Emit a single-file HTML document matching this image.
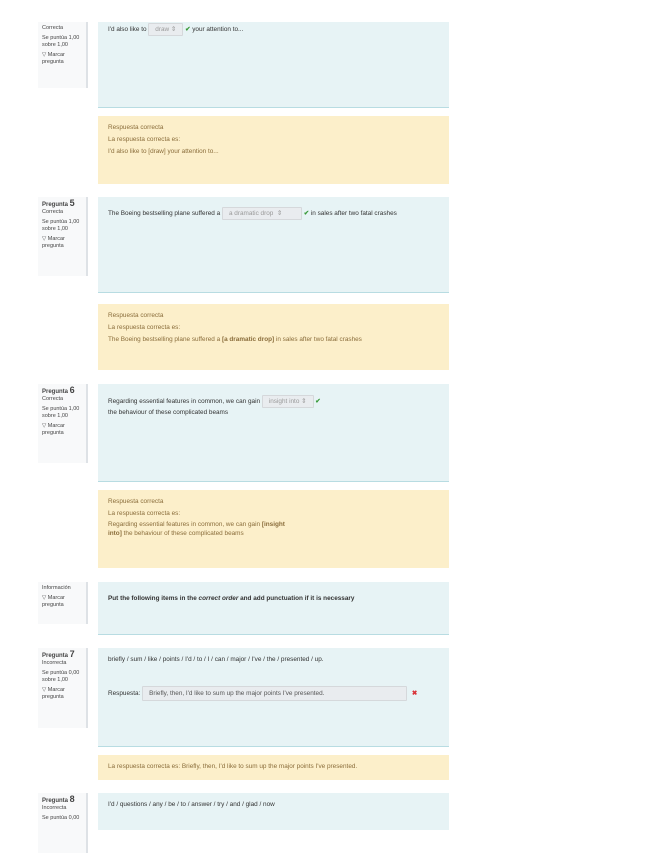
<!DOCTYPE html>
<html><head><meta charset="utf-8"><style>
*{box-sizing:border-box;margin:0;padding:0}
body{width:655px;height:848px;background:#fff;font-family:"Liberation Sans",sans-serif;font-size:6.4px;color:#333;position:relative;overflow:hidden}
.info{position:absolute;left:38px;width:50px;background:#f8f9fa;border-right:2px solid #dee2e6;padding:3px 4px;line-height:7px;color:#444;font-size:5.5px}
.info b{font-size:6px}
.info b span{font-size:9px;font-weight:bold}
.info p{margin-bottom:3px}
.c{position:absolute;left:98px;width:351px;background:#e7f3f5;border-bottom:1px solid #b8dce2;padding:4px 10px;line-height:9px}
.f{position:absolute;left:98px;width:351px;background:#fcefca;color:#8a6d3b;padding:6px 10px;line-height:12px}
.sel{display:inline-block;background:#e9ecef;border:1px solid #d5d8db;color:#999;padding:0 6px;height:13px;line-height:12px;vertical-align:middle;border-radius:1px}
.ok{color:#3a9a3a;font-weight:bold}
.x{color:#d9343a;font-weight:bold}
</style></head><body>

<div class="info" style="top:22px;height:66px"><p>Correcta</p><p>Se puntúa 1,00 sobre 1,00</p><p>▽ Marcar pregunta</p></div>
<div class="c" style="top:22px;height:86px;padding-top:1px">I'd also like to <span class="sel">draw ⇕</span> <span class="ok">✔</span> your attention to...</div>
<div class="f" style="top:116px;height:68px">Respuesta correcta<br>La respuesta correcta es:<br>I'd also like to [draw] your attention to...</div>

<div class="info" style="top:197px;height:79px"><b>Pregunta <span>5</span></b><p>Correcta</p><p>Se puntúa 1,00 sobre 1,00</p><p>▽ Marcar pregunta</p></div>
<div class="c" style="top:197px;height:96px;padding-top:10px">The Boeing bestselling plane suffered a <span class="sel" style="width:80px">a dramatic drop &nbsp;⇕</span> <span class="ok">✔</span> in sales after two fatal crashes</div>
<div class="f" style="top:304px;height:66px">Respuesta correcta<br>La respuesta correcta es:<br>The Boeing bestselling plane suffered a <b>[a dramatic drop]</b> in sales after two fatal crashes</div>

<div class="info" style="top:384px;height:79px"><b>Pregunta <span>6</span></b><p>Correcta</p><p>Se puntúa 1,00 sobre 1,00</p><p>▽ Marcar pregunta</p></div>
<div class="c" style="top:384px;height:98px;padding-top:11px">Regarding essential features in common, we can gain <span class="sel">insight into ⇕</span> <span class="ok">✔</span><br>the behaviour of these complicated beams</div>
<div class="f" style="top:490px;height:78px">Respuesta correcta<br>La respuesta correcta es:<br><span style="line-height:9px;display:inline-block">Regarding essential features in common, we can gain <b>[insight<br>into]</b> the behaviour of these complicated beams</span></div>

<div class="info" style="top:582px;height:42px"><p>Información</p><p>▽ Marcar pregunta</p></div>
<div class="c" style="top:582px;height:53px;padding-top:12px"><b>Put the following items in the <i>correct order</i> and add punctuation if it is necessary</b></div>

<div class="info" style="top:648px;height:80px"><b>Pregunta <span>7</span></b><p>Incorrecta</p><p>Se puntúa 0,00 sobre 1,00</p><p>▽ Marcar pregunta</p></div>
<div class="c" style="top:648px;height:99px;padding-top:7px">briefly / sum / like / points / I'd / to / I / can / major / I've / the / presented / up.
<div style="margin-top:22px">Respuesta: <span class="sel" style="width:265px;height:15px;color:#555;line-height:14px">Briefly, then, I'd like to sum up the major points I've presented.</span> <span class="x" style="margin-left:3px">✖</span></div></div>
<div class="f" style="top:755px;height:25px;padding-top:7px;line-height:10px">La respuesta correcta es: Briefly, then, I'd like to sum up the major points I've presented.</div>

<div class="info" style="top:793px;height:60px"><b>Pregunta <span>8</span></b><p>Incorrecta</p><p>Se puntúa 0,00</p></div>
<div class="c" style="top:793px;height:37px;border:none;padding-top:7px">I'd / questions / any / be / to / answer / try / and / glad / now</div>

</body></html>
